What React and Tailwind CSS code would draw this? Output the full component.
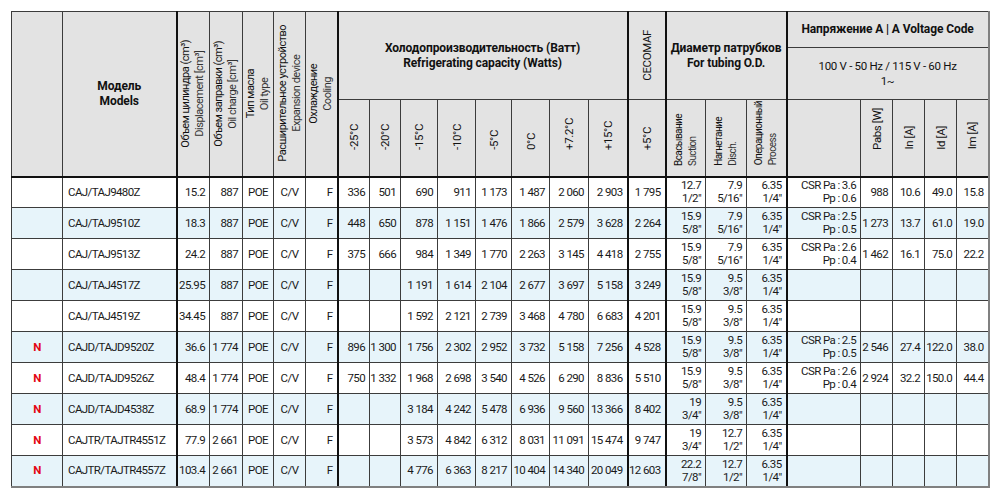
import React from "react";

const W = ["w-[51px]","w-[114px]","w-[33px]","w-[33px]","w-[31px]","w-[32px]","w-[32px]","w-[32px]","w-[31px]","w-[37px]","w-[38px]","w-[36px]","w-[38px]","w-[39px]","w-[39px]","w-[38px]","w-[40px]","w-[41px]","w-[40px]","w-[74px]","w-[32px]","w-[32px]","w-[32px]","w-[32px]"];
const THICK = new Set([2, 7, 15, 16, 19]);

const H = "bg-[#e3e3e3] border border-[#3c3c3c] text-[#111] p-0 overflow-hidden";
const HN = H + " font-normal";
const HB = H + " font-bold text-[12px] tracking-[-0.1px] leading-[15px]";
const TL = " border-l-2 border-l-[#111]";
const GR = " border-r-2 border-r-[#808080]";

const BOX_TALL = "h-[162px] items-center";
const BOX_TEMP = "h-[74px] items-end pb-[25px]";
const BOX_TUBE = "h-[74px] items-end pb-[9px]";
const BOX_CEC = "h-[86px] items-center";

function Rot({ a, b, align = "center", size = "text-[11px] tracking-[-0.5px]", box }) {
  return (
    <div className={"flex justify-center " + box}>
      <div
        className={
          "[writing-mode:vertical-rl] rotate-180 leading-[14px] whitespace-nowrap " +
          size +
          " " +
          (align === "center" ? "text-center" : "text-left")
        }
      >
        <div>{a}</div>
        {b ? <div className="text-[#333]">{b}</div> : null}
      </div>
    </div>
  );
}

const C = "CSR Pa : ";
const rows = [
  ["", "CAJ/TAJ9480Z", "15.2", "887", "POE", "C/V", "F", "336", "501", "690", "911", "1 173", "1 487", "2 060", "2 903", "1 795", ["12.7", "1/2\""], ["7.9", "5/16\""], ["6.35", "1/4\""], [C + "3.6", "Pp : 0.6"], "988", "10.6", "49.0", "15.8"],
  ["", "CAJ/TAJ9510Z", "18.3", "887", "POE", "C/V", "F", "448", "650", "878", "1 151", "1 476", "1 866", "2 579", "3 628", "2 264", ["15.9", "5/8\""], ["7.9", "5/16\""], ["6.35", "1/4\""], [C + "2.5", "Pp : 0.5"], "1 273", "13.7", "61.0", "19.0"],
  ["", "CAJ/TAJ9513Z", "24.2", "887", "POE", "C/V", "F", "375", "666", "984", "1 349", "1 770", "2 263", "3 145", "4 418", "2 755", ["15.9", "5/8\""], ["7.9", "5/16\""], ["6.35", "1/4\""], [C + "2.6", "Pp : 0.4"], "1 462", "16.1", "75.0", "22.2"],
  ["", "CAJ/TAJ4517Z", "25.95", "887", "POE", "C/V", "F", "", "", "1 191", "1 614", "2 104", "2 677", "3 697", "5 158", "3 249", ["15.9", "5/8\""], ["9.5", "3/8\""], ["6.35", "1/4\""], "", "", "", "", ""],
  ["", "CAJ/TAJ4519Z", "34.45", "887", "POE", "C/V", "F", "", "", "1 592", "2 121", "2 739", "3 468", "4 780", "6 683", "4 201", ["15.9", "5/8\""], ["9.5", "3/8\""], ["6.35", "1/4\""], "", "", "", "", ""],
  ["N", "CAJD/TAJD9520Z", "36.6", "1 774", "POE", "C/V", "F", "896", "1 300", "1 756", "2 302", "2 952", "3 732", "5 158", "7 256", "4 528", ["15.9", "5/8\""], ["9.5", "3/8\""], ["6.35", "1/4\""], [C + "2.5", "Pp : 0.5"], "2 546", "27.4", "122.0", "38.0"],
  ["N", "CAJD/TAJD9526Z", "48.4", "1 774", "POE", "C/V", "F", "750", "1 332", "1 968", "2 698", "3 540", "4 526", "6 290", "8 836", "5 510", ["15.9", "5/8\""], ["9.5", "3/8\""], ["6.35", "1/4\""], [C + "2.6", "Pp : 0.4"], "2 924", "32.2", "150.0", "44.4"],
  ["N", "CAJD/TAJD4538Z", "68.9", "1 774", "POE", "C/V", "F", "", "", "3 184", "4 242", "5 478", "6 936", "9 560", "13 366", "8 402", ["19", "3/4\""], ["9.5", "3/8\""], ["6.35", "1/4\""], "", "", "", "", ""],
  ["N", "CAJTR/TAJTR4551Z", "77.9", "2 661", "POE", "C/V", "F", "", "", "3 573", "4 842", "6 312", "8 031", "11 091", "15 474", "9 747", ["19", "3/4\""], ["12.7", "1/2\""], ["6.35", "1/4\""], "", "", "", "", ""],
  ["N", "CAJTR/TAJTR4557Z", "103.4", "2 661", "POE", "C/V", "F", "", "", "4 776", "6 363", "8 217", "10 404", "14 340", "20 049", "12 603", ["22.2", "7/8\""], ["12.7", "1/2\""], ["6.35", "1/4\""], "", "", "", "", ""],
];

function alignFor(i) {
  if (i === 0) return " text-center text-[#e30613] font-bold";
  if (i === 1) return " text-left pl-[5px]";
  if (i === 4 || i === 5) return " text-center";
  return " text-right pr-[4px]";
}

const temps = ["-25°C", "-20°C", "-15°C", "-10°C", "-5°C", "0°C", "+7.2°C", "+15°C"];
const T115 = "text-[11.5px] tracking-[-0.4px]";
const TSM = "text-[10px] tracking-[-0.6px]";

export default function App() {
  return (
    <div className="bg-white w-[1000px] h-[495px] pt-[11px] pl-[11px] font-['Roboto',sans-serif] text-[11.5px] tracking-[-0.6px]">
      <table className="table-fixed border-collapse w-[977px] text-[#1a1a1a]">
        <colgroup>
          {W.map((w, i) => (
            <col key={i} className={w} />
          ))}
        </colgroup>
        <thead>
          <tr className="h-[36px]">
            <th rowSpan={3} className={HN}></th>
            <th rowSpan={3} className={HB}>
              Модель
              <br />
              Models
            </th>
            <th rowSpan={3} className={HN + TL}>
              <Rot a="Объем цилиндра (cm³)" b="Displacement [cm³]" box={BOX_TALL} />
            </th>
            <th rowSpan={3} className={HN}>
              <Rot a="Объем заправки (cm³)" b="Oil charge [cm³]" box={BOX_TALL} />
            </th>
            <th rowSpan={3} className={HN}>
              <Rot a="Тип масла" b="Oil type" box={BOX_TALL} />
            </th>
            <th rowSpan={3} className={HN}>
              <Rot a="Расширительное устройство" b="Expansion device" box={BOX_TALL} />
            </th>
            <th rowSpan={3} className={HN}>
              <Rot a="Охлаждение" b="Cooling" box={BOX_TALL} />
            </th>
            <th colSpan={8} rowSpan={2} className={HB + TL}>
              Холодопроизводительность (Ватт)
              <br />
              Refrigerating capacity (Watts)
            </th>
            <th rowSpan={2} className={HN + TL}>
              <Rot a="CECOMAF" box={BOX_CEC} size={T115} />
            </th>
            <th colSpan={3} rowSpan={2} className={HB + TL}>
              Диаметр патрубков
              <br />
              For tubing O.D.
            </th>
            <th colSpan={5} className={HB + TL + GR}>
              Напряжение A | A Voltage Code
            </th>
          </tr>
          <tr className="h-[52px]">
            <th colSpan={5} className={HN + TL + GR + " leading-[15px] tracking-[-0.3px]"}>
              100 V - 50 Hz / 115 V - 60 Hz
              <br />1~
            </th>
          </tr>
          <tr className="h-[77px]">
            {temps.map((t, i) => (
              <th key={t} className={HN + (i === 0 ? TL : "")}>
                <Rot a={t} box={BOX_TEMP} size={T115} />
              </th>
            ))}
            <th className={HN + TL}>
              <Rot a="+5°C" box={BOX_TEMP} size={T115} />
            </th>
            <th className={HN + TL}>
              <Rot a="Всасывание" b="Suction" align="left" box={BOX_TUBE} size={TSM} />
            </th>
            <th className={HN}>
              <Rot a="Нагнетание" b="Disch." align="left" box={BOX_TUBE} size={TSM} />
            </th>
            <th className={HN}>
              <Rot a="Операционный" b="Process" align="left" box={BOX_TUBE} size={TSM} />
            </th>
            <th className={HN + TL}></th>
            <th className={HN}>
              <Rot a="Pabs [W]" box={BOX_TEMP} size={T115} />
            </th>
            <th className={HN}>
              <Rot a="In [A]" box={BOX_TEMP} size={T115} />
            </th>
            <th className={HN}>
              <Rot a="Id [A]" box={BOX_TEMP} size={T115} />
            </th>
            <th className={HN + GR}>
              <Rot a="Im [A]" box={BOX_TEMP} size={T115} />
            </th>
          </tr>
        </thead>
        <tbody>
          {rows.map((r, ri) => (
            <tr key={ri} className={"h-[31px] " + (ri % 2 === 1 ? "bg-[#e7f4fa]" : "bg-white")}>
              {r.map((c, i) => {
                let cls = "border border-[#3c3c3c] p-0 leading-[13px] whitespace-nowrap align-middle" + alignFor(i);
                if (THICK.has(i)) cls += TL;
                if (ri === 0) cls += " border-t-2 border-t-[#111]";
                if (ri === rows.length - 1) cls += " border-b-2 border-b-[#808080]";
                if (i === 23) cls += GR;
                return (
                  <td key={i} className={cls}>
                    {Array.isArray(c) ? (
                      <>
                        <div>{c[0]}</div>
                        <div>{c[1]}</div>
                      </>
                    ) : (
                      c
                    )}
                  </td>
                );
              })}
            </tr>
          ))}
        </tbody>
      </table>
    </div>
  );
}
